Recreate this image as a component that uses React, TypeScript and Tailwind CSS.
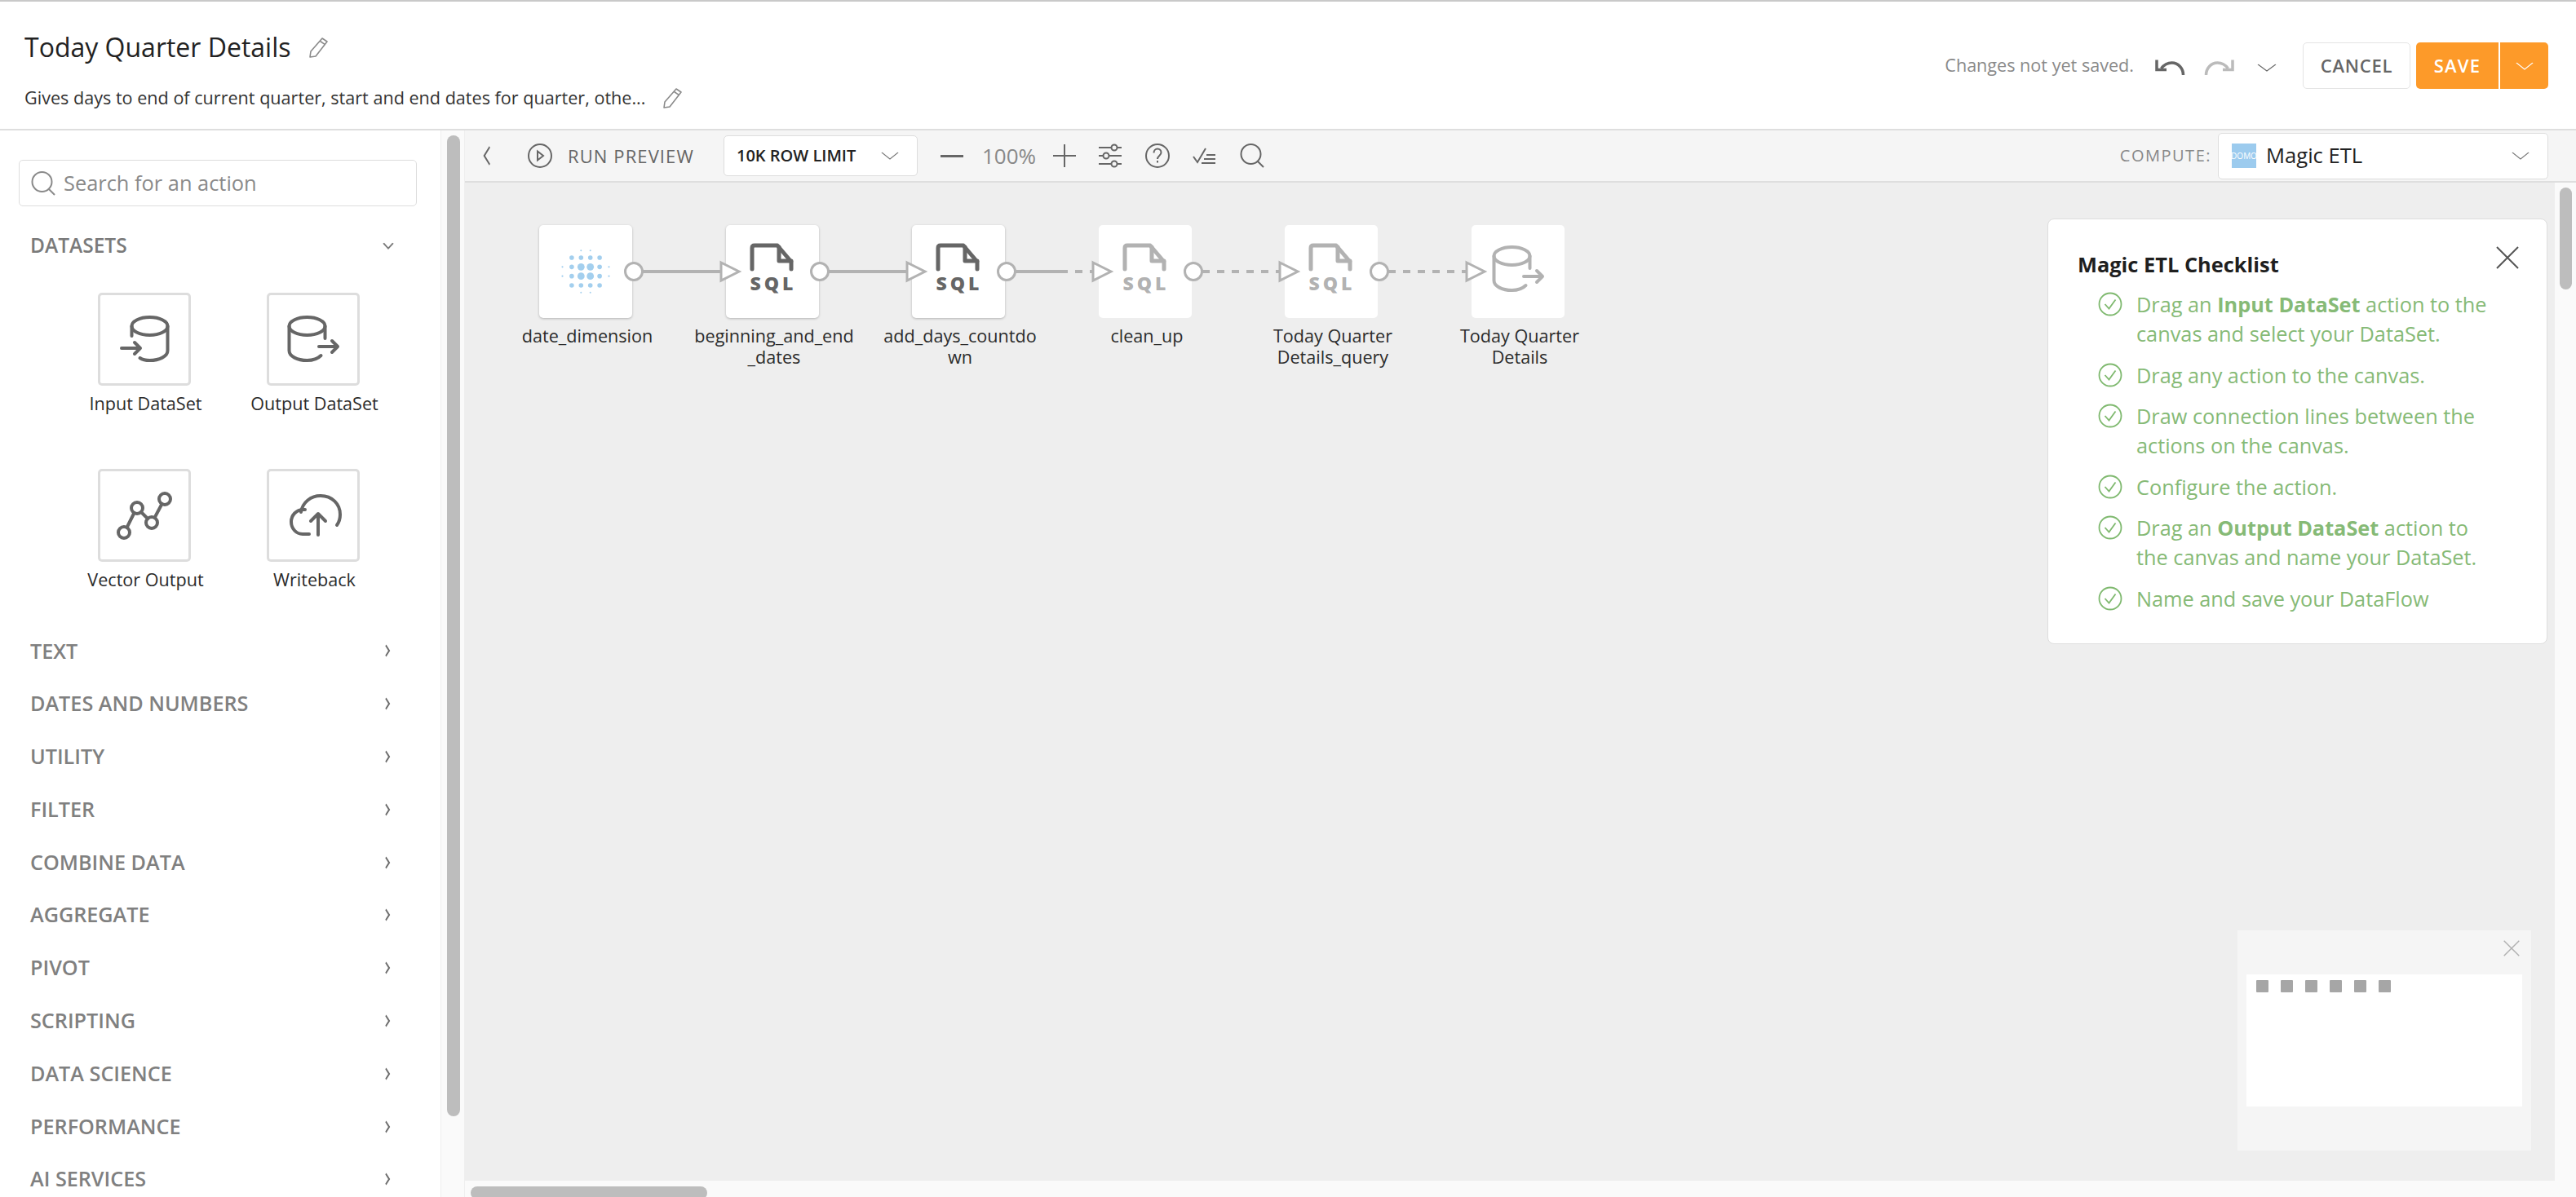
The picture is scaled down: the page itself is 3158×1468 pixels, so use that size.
import type { ReactNode } from 'react';

const SECTIONS = [
  'TEXT',
  'DATES AND NUMBERS',
  'UTILITY',
  'FILTER',
  'COMBINE DATA',
  'AGGREGATE',
  'PIVOT',
  'SCRIPTING',
  'DATA SCIENCE',
  'PERFORMANCE',
  'AI SERVICES',
];

function Chevron({ className, dir = 'down', strokeWidth = 2 }: { className: string; dir?: 'down' | 'left' | 'right'; strokeWidth?: number }) {
  const d = dir === 'down' ? 'M2 5l10 14L22 5' : dir === 'left' ? 'M17 2L7 12l10 10' : 'M7 2l10 10L7 22';
  return (
    <svg className={className} viewBox="0 0 24 24" fill="none" stroke="currentColor" strokeWidth={strokeWidth} preserveAspectRatio="none">
      <path d={d} />
    </svg>
  );
}

function Pencil({ className }: { className: string }) {
  return (
    <svg className={className} viewBox="0 0 26 26" fill="none" stroke="#8a8a8a" strokeWidth="1.6" strokeLinejoin="round">
      <path d="M18 2l6 4L10 24l-7 1 1-7L18 2z" />
      <path d="M15.5 5.5l6 4.2" />
    </svg>
  );
}

function SearchIcon({ className }: { className: string }) {
  return (
    <svg className={className} viewBox="0 0 30 30" fill="none" stroke="currentColor" strokeWidth="2">
      <circle cx="13.5" cy="13" r="12" />
      <path d="M22 22l7 7" />
    </svg>
  );
}

function Close({ className }: { className: string }) {
  return (
    <svg className={className} viewBox="0 0 28 28" fill="none" stroke="currentColor" strokeWidth="2">
      <path d="M1 1l26 26M27 1L1 27" />
    </svg>
  );
}

function IconBox({ stroke, width = 4, children }: { stroke: string; width?: number; children: ReactNode }) {
  return (
    <svg className="h-[114px] w-[114px]" viewBox="0 0 114 114" fill="none" stroke={stroke} strokeWidth={width} strokeLinecap="round" strokeLinejoin="round">
      {children}
    </svg>
  );
}

function InputDb() {
  return (
    <IconBox stroke="#666666">
      <ellipse cx="63.5" cy="41" rx="22" ry="11" />
      <path d="M41.5 41v12M85.5 41v30c0 7-10 12-22 12-5 0-9-1-12-3" />
      <path d="M29 68h22M45 61l7 7-7 7" />
    </IconBox>
  );
}

function OutputDb({ stroke = '#666666' }: { stroke?: string }) {
  return (
    <IconBox stroke={stroke}>
      <ellipse cx="49.5" cy="41" rx="22" ry="11" />
      <path d="M27.5 41v30c0 7 10 12 22 12 7 0 13-2 17-6M71.5 41v15" />
      <path d="M64 66h22M80 59l7 7-7 7" />
    </IconBox>
  );
}

function VectorIcon() {
  return (
    <IconBox stroke="#666666">
      <circle cx="32" cy="78" r="7" />
      <circle cx="48" cy="48" r="7" />
      <circle cx="66" cy="66" r="7" />
      <circle cx="82" cy="37" r="7" />
      <path d="M35.500 72l9-18M53 53l8 8M69.500 60l9-17" />
    </IconBox>
  );
}

function WritebackIcon() {
  return (
    <IconBox stroke="#666666">
      <path d="M52 80H44c-8 0-14-7-14-15s6-15 15-15h2" />
      <path d="M42 53c2-12 12-20 24-20 14 0 24 10 24 23 0 5-1 9-4 13" />
      <path d="M63 81V56M54 64l9-9 9 9" />
    </IconBox>
  );
}

function SqlIcon({ color }: { color: string }) {
  return (
    <IconBox stroke={color} width={5}>
      <path d="M32 54V28q0-3 3-3h28l17 20v9" />
      <path d="M65 27v17h15" />
      <text x="58" y="80" fill={color} stroke="none" textAnchor="middle" fontFamily="Open Sans" fontWeight="800" fontSize="23" letterSpacing="4">
        SQL
      </text>
    </IconBox>
  );
}

function DotsIcon() {
  const dots: { x: number; y: number; r: number }[] = [];
  for (const a of [-1.5, -0.5, 0.5, 1.5]) {
    for (const b of [-1.5, -0.5, 0.5, 1.5]) {
      dots.push({ x: a, y: b, r: Math.abs(a) < 1 && Math.abs(b) < 1 ? 4.4 : 2.8 });
    }
  }
  for (const a of [-0.5, 0.5]) {
    for (const s of [-1, 1]) {
      dots.push({ x: a, y: s * 2.27, r: 1 });
      dots.push({ x: s * 2.5, y: a, r: 1.100 });
    }
  }
  return (
    <svg className="h-[114px] w-[114px]" viewBox="0 0 114 114">
      {dots.map((d, i) => (
        <circle key={i} cx={57 + d.x * 11.4} cy={57 + d.y * 11.3} r={d.r} fill="#a3cfee" />
      ))}
    </svg>
  );
}

function CheckCircle() {
  return (
    <svg className="mt-[3px] h-[30px] w-[30px] shrink-0" viewBox="0 0 30 30" fill="none" stroke="#7fb96f" strokeWidth="1.800">
      <circle cx="15" cy="15" r="13.500" />
      <path d="M8.500 15l5 5.500 8-11" />
    </svg>
  );
}

function Tile({ label, children }: { label: string; children: ReactNode }) {
  return (
    <div className="flex w-[207px] flex-col items-center">
      <div className="h-[114px] w-[114px] rounded-[5px] bg-white shadow-[inset_0_0_0_3px_#dddddd]">{children}</div>
      <div className="mt-[7px] pl-1 text-[21.6px] leading-[30px] whitespace-nowrap text-[#2b2b2b]">{label}</div>
    </div>
  );
}

function Sidebar() {
  return (
    <aside className="w-[540px] shrink-0 overflow-hidden bg-white pt-[36px]">
      <div className="ml-[23px] flex h-[57px] w-[488px] items-center rounded-[5px] border border-[#dddddd] pl-[14px] text-[#8a8a8a]">
        <SearchIcon className="h-[30px] w-[30px]" />
        <span className="ml-[10px] text-[25.4px]">Search for an action</span>
      </div>
      <div className="mt-[30px] flex h-[36px] items-center justify-between pr-[57px] pl-[37px] text-[#7a7a7a]">
        <span className="text-[24.5px] font-semibold">DATASETS</span>
        <Chevron className="h-[11px] w-[14px]" strokeWidth={3.500} />
      </div>
      <div className="mt-[40px] ml-[73px] flex">
        <Tile label="Input DataSet">
          <InputDb />
        </Tile>
        <Tile label="Output DataSet">
          <OutputDb />
        </Tile>
      </div>
      <div className="mt-[65px] ml-[73px] flex">
        <Tile label="Vector Output">
          <VectorIcon />
        </Tile>
        <Tile label="Writeback">
          <WritebackIcon />
        </Tile>
      </div>
      <div className="mt-[40px]">
        {SECTIONS.map((s) => (
          <div key={s} className="flex h-[64.8px] items-center justify-between pr-[60px] pl-[37px] text-[#808080]">
            <span className="text-[25.2px] font-semibold">{s}</span>
            <Chevron className="h-[16px] w-[10px] text-[#6e6e6e]" dir="right" strokeWidth={4} />
          </div>
        ))}
      </div>
    </aside>
  );
}

function Header() {
  return (
    <header className="flex h-[158px] shrink-0 justify-between border-b-2 border-[#dedede] bg-white">
      <div className="pt-[34px] pl-[30px]">
        <div className="flex h-[44px] items-center">
          <h1 className="text-[32px] leading-[44px] text-[#222222]">Today Quarter Details</h1>
          <Pencil className="ml-[20px] h-[26px] w-[26px]" />
        </div>
        <div className="mt-[25px] flex h-[30px] items-center">
          <p className="text-[21.6px] leading-[30px] text-[#333333]">Gives days to end of current quarter, start and end dates for quarter, othe...</p>
          <Pencil className="ml-[20px] h-[26px] w-[26px]" />
        </div>
      </div>
      <div className="flex items-start pt-[50px] pr-[34px]">
        <span className="mt-[13px] text-[21.6px] leading-[30px] text-[#8a8a8a]">Changes not yet saved.</span>
        <svg className="mt-[20px] ml-[25px] h-[20px] w-[38px]" viewBox="0 0 38 20" fill="none" stroke="#666666" strokeWidth="3.500">
          <path d="M35.500 20c0-8-6-15-14-15-5 0-10 3-13 7" />
          <path d="M3 1.500v12h12" />
        </svg>
        <svg className="mt-[20px] ml-[23px] h-[20px] w-[38px]" viewBox="0 0 38 20" fill="none" stroke="#bbbbbb" strokeWidth="3.500">
          <path d="M2.500 20c0-8 6-15 14-15 5 0 10 3 13 7" />
          <path d="M35 1.500v12H23" />
        </svg>
        <Chevron className="mt-[24px] ml-[26px] h-[14px] w-[26px] text-[#666666]" strokeWidth={1.500} />
        <div className="ml-[31px] flex h-[57px] w-[132px] items-center justify-center rounded-[5px] border border-[#e4e4e4] text-[22px] font-semibold tracking-[0.800px] text-[#666666]">
          CANCEL
        </div>
        <div className="ml-[7px] flex h-[57px] w-[101px] items-center justify-center rounded-l-[5px] bg-[#fd9a29] text-[22px] font-semibold tracking-[1.200px] text-white">
          SAVE
        </div>
        <div className="ml-[2px] flex h-[57px] w-[59px] items-center justify-center rounded-r-[5px] bg-[#fd9a29] text-white">
          <Chevron className="h-[14px] w-[24px]" strokeWidth={1.500} />
        </div>
      </div>
    </header>
  );
}

function Toolbar() {
  return (
    <div className="flex h-[64px] shrink-0 items-center border-b-2 border-[#dedede] bg-[#f5f5f5] text-[#666666]">
      <Chevron className="ml-[19px] h-[26px] w-[16px]" dir="left" strokeWidth={2.500} />
      <svg className="ml-[42px] h-[30px] w-[30px]" viewBox="0 0 30 30" fill="none" stroke="currentColor" strokeWidth="2">
        <circle cx="15" cy="15" r="14" />
        <path d="M12 9.500l7 5.500-7 5.500z" />
      </svg>
      <span className="ml-[19px] w-[153px] text-[22px] font-normal tracking-[1.100px] whitespace-nowrap">RUN PREVIEW</span>
      <div className="ml-[38px] flex h-[50px] w-[238px] items-center rounded-[5px] border border-[#dddddd] bg-white pr-[21px] pl-[15px]">
        <span className="flex-1 text-[20px] font-semibold whitespace-nowrap text-[#222222]">10K ROW LIMIT</span>
        <Chevron className="h-[14px] w-[24px] text-[#777777]" strokeWidth={1.500} />
      </div>
      <div className="ml-[28px] h-[3px] w-[28px] bg-[#666666]" />
      <span className="ml-[23px] w-[65px] text-[26px] text-[#888888]">100%</span>
      <svg className="ml-[22px] h-[28px] w-[28px]" viewBox="0 0 28 28" fill="none" stroke="currentColor" strokeWidth="2">
        <path d="M0 14h28M14 0v28" />
      </svg>
      <svg className="ml-[28px] h-[30px] w-[28px]" viewBox="0 0 28 30" fill="none" stroke="currentColor" strokeWidth="2">
        <path d="M0 5h28M0 15h28M0 25h28" />
        <circle cx="19" cy="5" r="3.500" fill="#f5f5f5" />
        <circle cx="9" cy="15" r="3.500" fill="#f5f5f5" />
        <circle cx="19" cy="25" r="3.500" fill="#f5f5f5" />
      </svg>
      <svg className="ml-[29px] h-[30px] w-[30px]" viewBox="0 0 30 30" fill="none" stroke="currentColor" strokeWidth="2">
        <circle cx="15" cy="15" r="14" />
        <path d="M10.500 11.500c0-3 2-5 4.500-5s4.500 2 4.500 4.500c0 4-4.500 4-4.500 8M15 21v2.500" />
      </svg>
      <svg className="ml-[28px] h-[20px] w-[30px]" viewBox="0 0 30 20" fill="none" stroke="currentColor" strokeWidth="2">
        <path d="M1 11l5 7L16 1M17 9h11M14 14h14M11 19h17" />
      </svg>
      <SearchIcon className="ml-[28px] h-[30px] w-[30px]" />
      <div className="flex-1" />
      <span className="text-[20px] tracking-[1.500px] text-[#888888]">COMPUTE:</span>
      <div className="mr-[34px] ml-[8px] flex h-[57px] w-[405px] items-center rounded-[5px] border border-[#dddddd] bg-white pr-[21px] pl-[16px]">
        <div className="flex h-[30px] w-[30px] items-center justify-center overflow-hidden bg-[#9ccbee] text-[10px] leading-none text-white">DOMO</div>
        <span className="ml-[12px] flex-1 text-[25.6px] text-[#222222]">Magic ETL</span>
        <Chevron className="h-[14px] w-[24px] text-[#777777]" strokeWidth={1.500} />
      </div>
    </div>
  );
}

const ArrowColor = '#b2b2b2';

function Links() {
  const circles = [207, 435, 664, 893, 1121];
  const arrows = [313, 541, 769, 998, 1227];
  return (
    <svg className="absolute top-0 left-0 h-[200px] w-[1300px]" viewBox="0 0 1300 200" fill="none" stroke={ArrowColor} strokeWidth="3">
      <path d="M218 109h96M446 109h96M675 109h55" strokeWidth="4" />
      <path d="M730 109h40M904 109h95M1132 109h96" strokeWidth="4" strokeDasharray="9 9" />
      {arrows.map((x) => (
        <path key={x} d={`M${x + 1} 98l22 11-22 11z`} fill="#ffffff" />
      ))}
      {circles.map((x) => (
        <circle key={x} cx={x} cy="109" r="10.500" fill="#ffffff" />
      ))}
    </svg>
  );
}

function Node({ pos, label, faded, children }: { pos: string; label: string; faded?: boolean; children: ReactNode }) {
  return (
    <div className={`absolute top-[52px] flex w-[200px] flex-col items-center ${pos}`}>
      <div className={`h-[114px] w-[114px] rounded-[5px] bg-white ${faded ? '' : 'shadow-[0_1px_3px_rgba(0,0,0,0.25)]'}`}>{children}</div>
      <div className="mt-[9px] w-[200px] pl-1 text-center text-[21.6px] leading-[26px] wrap-anywhere text-[#2b2b2b]">{label}</div>
    </div>
  );
}

function Checklist() {
  const items: ReactNode[] = [
    <>
      Drag an <b className="font-bold">Input DataSet</b> action to the canvas and select your DataSet.
    </>,
    'Drag any action to the canvas.',
    'Draw connection lines between the actions on the canvas.',
    'Configure the action.',
    <>
      Drag an <b className="font-bold">Output DataSet</b> action to the canvas and name your DataSet.
    </>,
    'Name and save your DataFlow',
  ];
  return (
    <div className="absolute top-[44px] left-[1940px] h-[522px] w-[613px] rounded-[8px] border border-[#dddddd] bg-white pt-[36px] pl-[36px]">
      <div className="text-[25.4px] leading-[38px] font-bold text-[#1f1f1f]">Magic ETL Checklist</div>
      <div className="absolute top-[33px] right-[34px] text-[#555555]">
        <Close className="h-[28px] w-[28px]" />
      </div>
      <ul className="mt-[12px] ml-[25px] flex w-[490px] flex-col gap-[14.6px]">
        {items.map((item, i) => (
          <li key={i} className="flex gap-[17px] text-[25.3px] leading-[36px] text-[#86ba76]">
            <CheckCircle />
            <span>{item}</span>
          </li>
        ))}
      </ul>
    </div>
  );
}

function Minimap() {
  return (
    <div className="absolute top-[917px] left-[2173px] h-[270px] w-[360px] bg-[#f5f5f5]">
      <div className="absolute top-[12px] right-[14px] text-[#b0b0b0]">
        <Close className="h-[20px] w-[20px]" />
      </div>
      <div className="absolute top-[54px] left-[11px] flex h-[162px] w-[338px] gap-[15px] bg-white pt-[7px] pl-[12px]">
        {[0, 1, 2, 3, 4, 5].map((i) => (
          <div key={i} className="h-[15px] w-[15px] rounded-[1px] bg-[#a6a6a6]" />
        ))}
      </div>
    </div>
  );
}

function Canvas() {
  return (
    <div className="relative flex-1 overflow-hidden bg-[#eeeeee]">
      <Node pos="left-[48px]" label="date_dimension">
        <DotsIcon />
      </Node>
      <Node pos="left-[277px]" label="beginning_and_end_dates">
        <SqlIcon color="#666666" />
      </Node>
      <Node pos="left-[505px]" label="add_days_countdown">
        <SqlIcon color="#666666" />
      </Node>
      <Node pos="left-[734px]" label="clean_up" faded>
        <SqlIcon color="#b2b2b2" />
      </Node>
      <Node pos="left-[962px]" label="Today Quarter Details_query" faded>
        <SqlIcon color="#b2b2b2" />
      </Node>
      <Node pos="left-[1191px]" label="Today Quarter Details" faded>
        <div className="-translate-y-[3px]">
          <OutputDb stroke="#b2b2b2" />
        </div>
      </Node>
      <Links />
      <Checklist />
      <Minimap />
    </div>
  );
}

export default function App() {
  return (
    <div className="flex h-screen w-screen flex-col overflow-hidden border-t-2 border-[#c9c9c9] bg-white font-['Open_Sans',sans-serif]">
      <Header />
      <div className="flex min-h-0 flex-1">
        <Sidebar />
        <div className="w-[30px] shrink-0 border-x border-[#eeeeee] bg-[#fafafa] pt-[6px] pl-[7px]">
          <div className="h-[1203px] w-[16px] rounded-full bg-[#bdbdbd]" />
        </div>
        <main className="flex min-w-0 flex-1 flex-col">
          <Toolbar />
          <div className="flex min-h-0 flex-1">
            <Canvas />
            <div className="w-[26px] shrink-0 bg-[#fafafa] pt-[6px] pl-[6px]">
              <div className="h-[125px] w-[15px] rounded-full bg-[#bdbdbd]" />
            </div>
          </div>
          <div className="h-[20px] shrink-0 bg-[#fafafa] pt-[7px] pl-[7px]">
            <div className="h-[16px] w-[290px] rounded-full bg-[#bdbdbd]" />
          </div>
        </main>
      </div>
    </div>
  );
}
